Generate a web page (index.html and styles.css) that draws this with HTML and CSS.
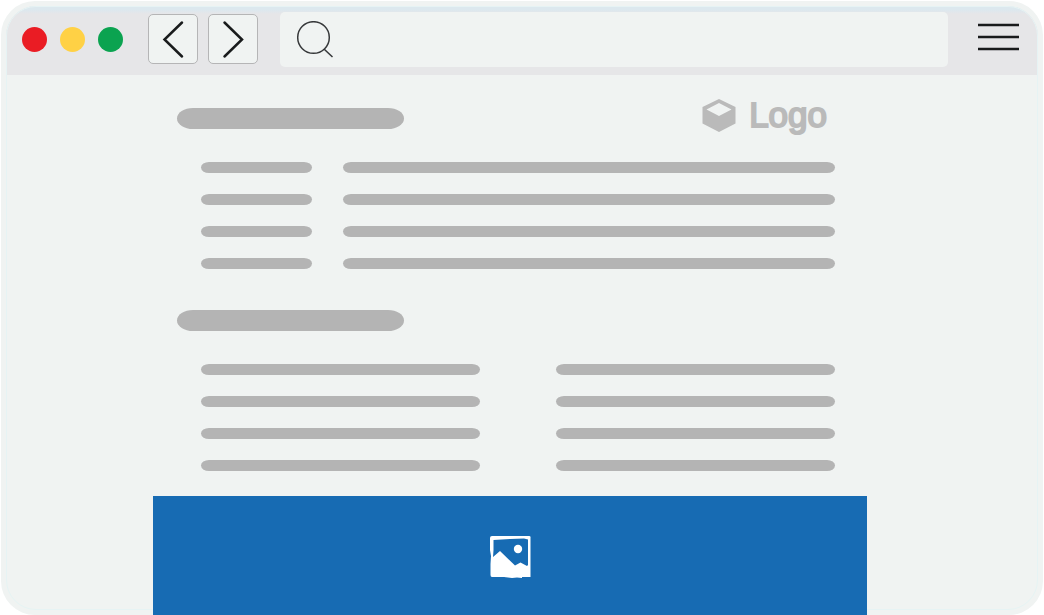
FILE: index.html
```
<!DOCTYPE html>
<html lang="en">
  <head>
    <meta charset="utf-8" />
    <meta name="viewport" content="width=device-width, initial-scale=1.0" />
    <title>Browser mockup</title>
    <link rel="stylesheet" href="styles.css">
  </head>
  <body>
    <div class="window">
      <header class="toolbar">
        <div class="dots">
          <span class="dot red"></span>
          <span class="dot yellow"></span>
          <span class="dot green"></span>
        </div>
        <div class="nav">
          <button type="button" aria-label="Back">
            <svg width="48" height="48" viewBox="0 0 48 48">
              <path d="M33 7.500L15.500 24.500L33 41.500" />
            </svg>
          </button>
          <button type="button" aria-label="Forward">
            <svg width="48" height="48" viewBox="0 0 48 48">
              <path d="M15.500 7.500L33 24.500L15.500 41.500" />
            </svg>
          </button>
        </div>
        <div class="search">
          <label for="address">
            <svg width="38" height="38" viewBox="0 0 38 38" role="img" aria-label="Search">
              <circle cx="17.500" cy="16.500" r="15.800" />
              <path d="M28 28L36.500 36" />
            </svg>
          </label>
          <input id="address" type="text" />
        </div>
        <button type="button" class="menu" aria-label="Menu">
          <svg width="42" height="28" viewBox="0 0 42 28">
            <path d="M1 2h41M1 14h41M1 26h41" />
          </svg>
        </button>
      </header>

      <main>
        <div class="page">
          <div class="page-header">
            <div class="bar title"></div>
            <div class="logo">
              <svg width="34" height="34" viewBox="0 0 34 34">
                <path fill-rule="evenodd" d="M17 1L33.500 9V25.500L17 34L.5 25.500V9ZM17 5L4.500 11.500L17 18L29.500 11.500Z" />
              </svg>
              <span>Logo</span>
            </div>
          </div>
          <div class="rows details">
            <div class="bar"></div>
            <div class="bar"></div>
            <div class="bar"></div>
            <div class="bar"></div>
            <div class="bar"></div>
            <div class="bar"></div>
            <div class="bar"></div>
            <div class="bar"></div>
          </div>

          <div class="bar title second"></div>
          <div class="rows halves">
            <div class="bar"></div>
            <div class="bar"></div>
            <div class="bar"></div>
            <div class="bar"></div>
            <div class="bar"></div>
            <div class="bar"></div>
            <div class="bar"></div>
            <div class="bar"></div>
          </div>
        </div>

        <div class="banner">
          <svg width="44" height="44" viewBox="0 0 44 44" role="img" aria-label="Image">
            <path fill-rule="evenodd" d="M4 2H41Q43 2 42.500 4V43H34V44L29 43.500L24 44L16 43H4Q2.500 43 2.500 41V30L3 22L2 16V4Q2 2 4 2ZM5.500 6V16L5 23L12 17L27 31.500L32.500 28.500L39 32L40 31V5.500L36 4.500L22 5Z" />
            <circle cx="30" cy="15" r="4.200" />
          </svg>
        </div>
      </main>
    </div>
  </body>
</html>
```

FILE: styles.css
```
* {
  box-sizing: border-box;
}

body {
  margin: 0;
  background-color: #fff;
  font-family: "Liberation Sans", Arial, sans-serif;
}

button {
  padding: 0;
  border: 0;
  background: none;
}

svg {
  display: block;
}

/* Browser frame */
.window {
  position: relative;
  display: flex;
  flex-direction: column;
  min-height: calc(100vh - 1px);
  margin: 1px 1px 0;
  padding: 5px 5px 0;
  border-radius: 34px;
  background-color: #f0f3f2;
}

.window::before {
  content: "";
  position: absolute;
  inset: 5px;
  border: 1px solid #e6f3f4;
  border-radius: 30px;
  pointer-events: none;
}

.toolbar {
  display: flex;
  align-items: center;
  padding: 6px 19px 8px 16px;
  border-radius: 30px 30px 0 0;
  background: linear-gradient(#dce8ee 4px, #e6e6e8 8px);
}

.dots {
  display: flex;
  gap: 13px;
}

.dot {
  width: 25px;
  height: 25px;
  border-radius: 50%;
}

.red {
  background-color: #ea1c24;
}

.yellow {
  background-color: #ffd145;
}

.green {
  background-color: #0ba350;
}

.nav {
  display: flex;
  gap: 10px;
  margin: 0 0 2px 25px;
}

.nav button {
  width: 50px;
  height: 50px;
  border: 1px solid #b5b5b6;
  border-radius: 5px;
  background-color: #f0f3f2;
}

.nav path,
.menu path {
  fill: none;
  stroke: #191b1c;
  stroke-width: 2.5;
  stroke-linecap: round;
}

.search {
  display: flex;
  flex: 1;
  align-items: center;
  height: 55px;
  margin: 0 29px 0 22px;
  padding-left: 16px;
  border-radius: 5px;
  background-color: #f0f3f2;
}

.search svg {
  fill: none;
  stroke: #36383a;
  stroke-width: 1.5;
}

.search input {
  flex: 1;
  min-width: 0;
  height: 100%;
  padding: 0 12px;
  border: 0;
  outline: 0;
  background: none;
  font-size: 20px;
}

.menu {
  margin-bottom: 5px;
}

.menu path {
  stroke-linecap: butt;
}

/* Page skeleton */
main {
  position: relative;
  display: flex;
  flex: 1;
  flex-direction: column;
  width: 100%;
  max-width: 738px;
  margin: 0 auto;
  padding-right: 24px;
}

.page {
  padding: 22px 32px 25px 24px;
}

.page-header {
  display: flex;
  align-items: flex-end;
  justify-content: space-between;
  margin-bottom: 29px;
}

.page-header .title {
  margin-bottom: 4px;
}

.bar {
  height: 11px;
  border-radius: 8px / 50%;
  background-color: #b4b4b4;
}

.title {
  width: 227px;
  height: 21px;
  border-radius: 16px / 50%;
}

.second {
  margin: 41px 0 33px;
}

.rows {
  display: grid;
  row-gap: 21px;
  padding-left: 24px;
}

.details {
  grid-template-columns: 111px 1fr;
  column-gap: 31px;
}

.halves {
  grid-template-columns: 1fr 1fr;
  column-gap: 76px;
}

.logo {
  display: flex;
  align-items: center;
  gap: 13px;
  padding-right: 8px;
  color: #bababa;
  font-size: 35px;
  line-height: 36px;
  -webkit-text-stroke: 2px #bababa;
}

.logo svg {
  fill: #bababa;
}

.banner {
  display: flex;
  flex: 1;
  align-items: center;
  justify-content: center;
  min-height: 119px;
  background-color: #176bb3;
}

.banner svg {
  fill: #fff;
}
```
